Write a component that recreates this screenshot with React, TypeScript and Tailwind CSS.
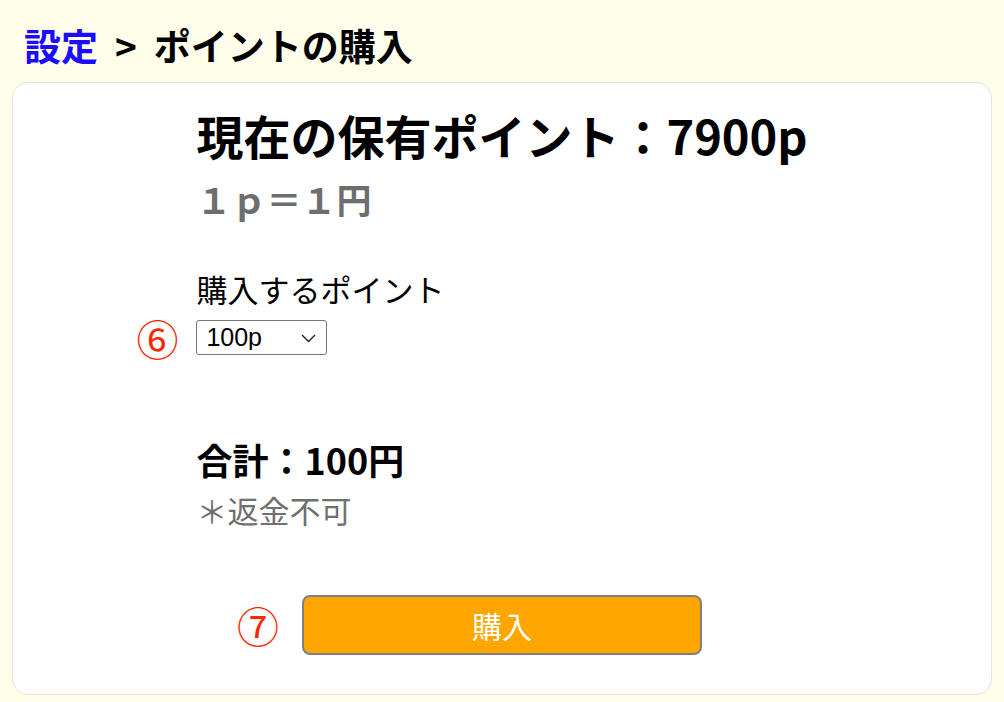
import React from "react";

const jp = { fontFamily: '"Noto Sans CJK JP", "Noto Sans", sans-serif' };

function Note({ n, className }: { n: string; className: string }) {
  return (
    <span
      className={"absolute top-1/2 -translate-y-1/2 text-[42px] leading-none text-[#ff2600] " + className}
    >
      {n}
    </span>
  );
}

export default function App() {
  return (
    <div className="min-h-[702px] bg-[#fefeea] text-black" style={jp}>
      <div className="h-[82px] pl-6 pt-5">
        <h1 className="text-[37px] leading-[50px] font-bold">
          <a className="text-[#1a0dff]">設定</a>
          <span className="mx-[17px]">&gt;</span>
          <span>ポイントの購入</span>
        </h1>
      </div>

      <div className="mx-3 rounded-2xl border border-[#e4e4dc] bg-white pt-[24px] pb-[39px]">
        <div className="mx-auto w-fit">
          <h2 className="text-[47px] leading-[56px] font-bold whitespace-nowrap">
            現在の保有ポイント：7900p
          </h2>
          <p className="mt-[16px] text-[35px] leading-[40px] font-bold text-[#6e6e6e]">
            １ｐ＝１円
          </p>

          <label className="mt-[50px] block text-[31px] leading-[40px]">購入するポイント</label>
          <div className="relative mt-[11px] w-[131px]">
            <Note n="⑥" className="right-full mr-[18px]" />
            <select
              className="h-[35px] w-[131px] appearance-none rounded-[3px] border border-[#767676] bg-white pl-[9px] text-[25px] leading-none text-black"
              style={{ fontFamily: '"Liberation Sans", Arial, sans-serif' }}
              defaultValue="100"
            >
              <option value="100">100p</option>
              <option value="500">500p</option>
              <option value="1000">1000p</option>
            </select>
            <svg
              className="pointer-events-none absolute right-[11px] top-[14px]"
              width="15"
              height="9"
              viewBox="0 0 15 9"
              fill="none"
              stroke="#222"
              strokeWidth="1.4"
            >
              <path d="M1 1l6.5 6.5L14 1" />
            </svg>
          </div>

          <p className="mt-[82px] text-[36px] leading-[44px] font-bold">合計：100円</p>
          <p className="mt-[9px] text-[31px] leading-[40px] text-[#707070]">＊返金不可</p>
        </div>

        <div className="relative mx-auto mt-[65px] w-[400px]">
          <Note n="⑦" className="right-full mr-[23px]" />
          <button className="h-[60px] w-[400px] rounded-lg border-2 border-[#808080] bg-[#ffa500] text-[30px] font-normal text-white">
            購入
          </button>
        </div>
      </div>
    </div>
  );
}
